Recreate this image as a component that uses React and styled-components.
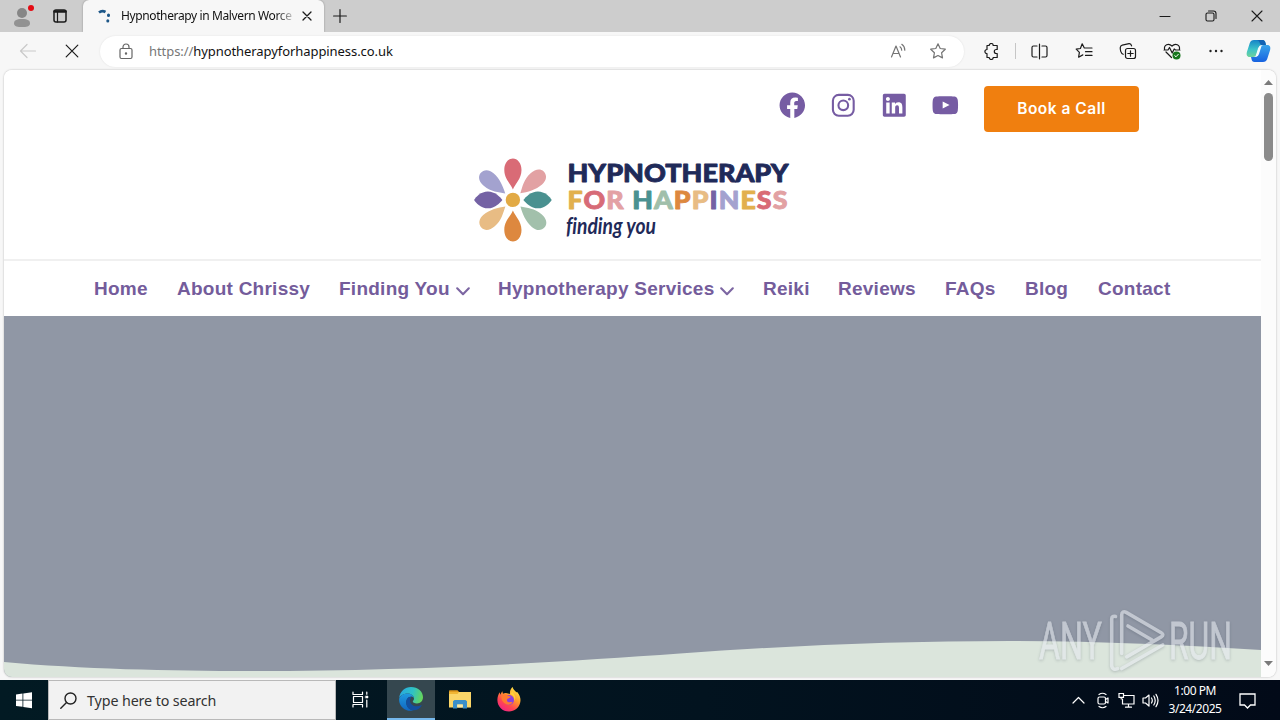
import React from "react";
import styled, { createGlobalStyle } from "styled-components";

const Global = createGlobalStyle`
  * { box-sizing: border-box; }
  html, body { margin: 0; padding: 0; overflow: hidden; }
  body { font-family: "Noto Sans", "Open Sans", sans-serif; }
  svg { display: block; flex: none; }
`;

const Desktop = styled.div`
  width: 1280px; height: 720px; display: flex; flex-direction: column; background: #f7f7f7;
`;
const TabStrip = styled.div`
  height: 32px; flex: none; display: flex; align-items: stretch; background: #cdcdcd;
`;
const Slot = styled.div`
  width: ${p => p.$w}px; flex: none; display: flex; align-items: center; justify-content: center;
  margin-left: ${p => p.$ml || 0}px;
`;
const Tab = styled.div`
  width: 241px; display: flex; align-items: center; padding-left: 14px; background: #f7f7f7;
  border-radius: 6px 6px 0 0; box-shadow: 0 0 2px rgba(0,0,0,.35); clip-path: inset(0 -3px 0 -3px);
`;
const TabTitle = styled.div`
  width: 178px; margin-left: 10px; white-space: nowrap; font-size: 12px; line-height: 18px;
  color: #111; letter-spacing: -0.38px;
  mask-image: linear-gradient(90deg, #000 155px, rgba(0,0,0,.2) 172px);
`;
const Spacer = styled.div`flex: 1;`;

const Toolbar = styled.div`
  height: 38px; flex: none; display: flex; align-items: center; padding-left: 6px;
`;
const Address = styled.div`
  width: 864px; height: 31px; margin-left: 6px; padding: 0 5px 0 16px; border-radius: 16px; background: #fff;
  display: flex; align-items: center; box-shadow: 0 0 2px rgba(0,0,0,.1);
`;
const Url = styled.div`
  flex: 1; margin-left: 13px; font-size: 13px; line-height: 20px; color: #111; letter-spacing: -.07px; white-space: nowrap;
  span { color: #777; }
`;
const Divider = styled.div`width: 1px; height: 16px; margin: 0 1px 0 2px; background: #c6c6c6;`;

const Frame = styled.div`
  height: 607px; flex: none; margin: 0 4px; display: flex; background: #fff; border-radius: 8px; overflow: hidden;
  box-shadow: 0 0 2px rgba(0,0,0,.3);
`;
const Page = styled.main`width: 1257px; display: flex; flex-direction: column;`;
const Scrollbar = styled.div`
  width: 15px; background: #fcfcfc; display: flex; flex-direction: column; align-items: center; padding: 10px 0 10px;
`;
const Thumb = styled.div`width: 9px; height: 68px; margin-top: 8px; border-radius: 5px; background: #8b8b8b;`;

const Header = styled.header`
  height: 189px; flex: none; display: flex; flex-direction: column; padding-top: 16px; background: #fff;
`;
const TopRow = styled.div`height: 46px; display: flex; justify-content: flex-end; padding-right: 122px;`;
const Socials = styled.div`display: flex; gap: 20.4px; padding-top: 3.5px; margin-right: 23.4px;`;
const BookButton = styled.button`
  width: 155px; height: 46px; padding: 0; border: 0; border-radius: 4px; background: #f07f0f; color: #fff;
  font: 600 15.5px/46px Inter, sans-serif; letter-spacing: .5px;
`;
const LogoRow = styled.div`display: flex; padding: 24px 0 0 468px;`;

const Nav = styled.nav`
  height: 57px; flex: none; display: flex; align-items: center; gap: 30px; padding: 1px 0 0 90px;
  border-top: 2px solid #f0f0f0; background: #fff;
`;
const NavItem = styled.a`
  width: ${p => p.$w}px; flex: none; display: flex; align-items: center; gap: 6px;
  color: #745c9b; font: bold 19px/24px "Liberation Sans", sans-serif; letter-spacing: .25px; white-space: nowrap;
  svg { margin-top: 5px; }
`;
const Hero = styled.section`height: 361px; background: #9097a5;`;

const Taskbar = styled.footer`
  height: 40px; flex: none; margin-top: 3px; display: flex; align-items: stretch;
  background: linear-gradient(90deg, #021a23 0%, #02131f 55%, #020a18 100%);
`;
const Search = styled.div`
  width: 288px; display: flex; align-items: center; padding-left: 11px; gap: 10px; background: #f2f2f2;
  border: 1px solid #b9b9b9; color: #333; font-size: 14.3px; letter-spacing: -.12px; white-space: nowrap;
`;
const TaskItem = styled.div`
  width: 48px; margin-left: ${p => p.$ml || 0}px; display: flex; align-items: center; justify-content: center;
  background: ${p => (p.$active ? "#35474f" : "transparent")};
  border-bottom: 2px solid ${p => (p.$active ? "#76b9ed" : "transparent")};
`;
const Clock = styled.div`
  width: 66px; color: #fff; font-size: 12px; line-height: 18px; padding-top: 2px; text-align: center;
  letter-spacing: -.45px; white-space: nowrap;
`;
const Watermark = styled.div`
  position: absolute; left: 1030px; top: 604px; pointer-events: none;
  filter: drop-shadow(0 1px 1.5px rgba(60,70,85,.45)); opacity: .58;
`;

const Icon = ({ s = 18, w, h, sw = 1.2, c = "#1b1b1b", children }) => (
  <svg width={w || s} height={h || s} viewBox={`0 0 ${w || s} ${h || s}`} fill="none" stroke={c}
    strokeWidth={sw} strokeLinecap="round" strokeLinejoin="round">{children}</svg>
);

const STAR = "M9 1.8l2.2 4.7 5.1.7-3.7 3.6.9 5.1L9 13.5l-4.5 2.4.9-5.1L1.7 7.2l5.1-.7z";

const SOCIAL = {
  facebook: "M12 2C6.5 2 2 6.5 2 12c0 5 3.7 9.1 8.4 9.9v-7H7.9V12h2.5V9.8c0-2.5 1.5-3.9 3.8-3.9 1.1 0 2.2.2 2.2.2v2.5h-1.3c-1.2 0-1.6.8-1.6 1.6V12h2.8l-.4 2.9h-2.3v7C18.3 21.1 22 17 22 12c0-5.5-4.5-10-10-10z",
  linkedin: "M19.7,3H4.3C3.582,3,3,3.582,3,4.3v15.4C3,20.418,3.582,21,4.3,21h15.4c0.718,0,1.3-0.582,1.3-1.3V4.3C21,3.582,20.418,3,19.7,3z M8.339,18.338H5.667v-8.59h2.672V18.338z M7.004,8.574c-0.857,0-1.549-0.694-1.549-1.548c0-0.855,0.691-1.548,1.549-1.548c0.854,0,1.547,0.694,1.547,1.548C8.551,7.881,7.858,8.574,7.004,8.574z M18.339,18.338h-2.669v-4.177c0-0.996-0.017-2.278-1.387-2.278c-1.389,0-1.601,1.086-1.601,2.206v4.249h-2.667v-8.59h2.559v1.174h0.037c0.356-0.675,1.227-1.387,2.526-1.387c2.703,0,3.203,1.779,3.203,4.092V18.338z",
  youtube: "M21.8,8.001c0,0-0.195-1.378-0.795-1.985c-0.76-0.797-1.613-0.801-2.004-0.847c-2.799-0.202-6.997-0.202-6.997-0.202h-0.009c0,0-4.198,0-6.997,0.202C4.608,5.216,3.756,5.22,2.995,6.016C2.395,6.623,2.2,8.001,2.2,8.001S2,9.62,2,11.238v1.517c0,1.618,0.2,3.237,0.2,3.237s0.195,1.378,0.795,1.985c0.761,0.797,1.76,0.771,2.205,0.855c1.6,0.153,6.8,0.201,6.8,0.201s4.203-0.006,7.001-0.209c0.391-0.047,1.243-0.051,2.004-0.847c0.6-0.607,0.795-1.985,0.795-1.985s0.2-1.618,0.2-3.237v-1.517C22,9.62,21.8,8.001,21.8,8.001z M9.935,14.594l-0.001-5.62l5.404,2.82L9.935,14.594z",
};
const Social = ({ name }) => (
  <svg width="30.6" height="30.6" viewBox="0 0 24 24" fill="#765ca3">
    {name === "instagram" ? (
      <g fill="none" stroke="#765ca3" strokeWidth="1.65">
        <rect x="3.85" y="3.85" width="16.3" height="16.3" rx="4.6" />
        <circle cx="12" cy="12" r="3.8" />
        <circle cx="16.8" cy="7.2" r="1.05" fill="#765ca3" stroke="none" />
      </g>
    ) : <path d={SOCIAL[name]} />}
  </svg>
);

const PETAL = "M0,-10.5 C-2,-16 -8.6,-21 -8.6,-30 C-8.6,-37 -4.5,-41.5 0,-41.5 C4.500,-41.5 8.6,-37 8.6,-30 C8.6,-21 2,-16 0,-10.5Z";
const DIAGONAL = "M0,-10 C-3.500,-16 -8,-22 -8,-31 C-8,-37 -5.500,-41.5 -0.500,-42 C5,-42 8,-38 8,-32 C8,-24 4,-16 0,-10Z";
const SIDE = "M0,-10.5 C-3,-13 -8.4,-18 -8.4,-25 C-8.4,-32 -3,-37 0,-38.8 C3,-37 8.4,-32 8.4,-25 C8.4,-18 3,-13 0,-10.5Z";
const PETALS = [
  [0, "#d96b76", PETAL], [48, "#e2a1a3", DIAGONAL], [90, "#4a9190", SIDE], [131, "#a2c0ab", DIAGONAL],
  [180, "#dd883f", PETAL], [229, "#e8bc84", DIAGONAL], [270, "#7462a4", SIDE], [310, "#a3a2cf", DIAGONAL],
];
const HAPPY = [
  ["F", "#e2b04d"], ["O", "#d76b77"], ["R", "#e3a1a4"], [" ", "#fff"], ["H", "#4a9190"], ["A", "#a0bfaa"], ["P", "#dd883f"],
  ["P", "#e8bc84"], ["I", "#7462a4"], ["N", "#a3a2cf"], ["E", "#e2b04d"], ["S", "#d96b76"], ["S", "#e2a1a3"],
];
const Logo = () => (
  <svg width="330" height="96" viewBox="472 156 330 96">
    <g transform="translate(512.9 199.9)">
      {PETALS.map(([a, c, d]) => <path key={a} d={d} fill={c} transform={`rotate(${a})`} />)}
      <circle r="7.200" fill="#e2aa45" />
    </g>
    <g fontFamily="Lato, sans-serif" fontWeight="900" strokeWidth=".9" strokeLinejoin="round">
      <text x="567.5" y="181.500" fontSize="25.500" fill="#1f2a59" stroke="#1f2a59" textLength="221" lengthAdjust="spacingAndGlyphs">HYPNOTHERAPY</text>
      <text x="567.5" y="208.800" fontSize="24.500" letterSpacing="1" textLength="221" lengthAdjust="spacingAndGlyphs">
        {HAPPY.map(([l, c], i) => <tspan key={i} fill={c} stroke={c}>{l}</tspan>)}
      </text>
    </g>
    <text x="566" y="234" fill="#1f2a59" fontFamily="Lato, sans-serif" fontStyle="italic" fontWeight="700" fontSize="22"
      textLength="90" lengthAdjust="spacingAndGlyphs" style={{ fontVariantLigatures: "none" }}>finding you</text>
  </svg>
);

const Chevron = () => <Icon w={14} h={9} sw={2.1} c="#7c66a2"><path d="M1.2 1.300L7 7.200l5.800-5.900" /></Icon>;
const NAV = [
  ["Home", 53], ["About Chrissy", 132], ["Finding You", 129, true], ["Hypnotherapy Services", 235, true],
  ["Reiki", 45], ["Reviews", 77], ["FAQs", 50], ["Blog", 43], ["Contact", 73],
];

const Copilot = () => (
  <svg width="25" height="24" viewBox="0 0 25 24">
    <defs>
      <linearGradient id="cpA" x1="0" y1="0" x2="0" y2="1"><stop offset="0" stopColor="#1583c7" /><stop offset=".55" stopColor="#3cc3c9" /><stop offset="1" stopColor="#6fd39a" /></linearGradient>
      <linearGradient id="cpB" x1="0" y1="0" x2="0" y2="1"><stop offset="0" stopColor="#3aa5ea" /><stop offset="1" stopColor="#1762e0" /></linearGradient>
    </defs>
    <path d="M8 1h8.5c2 0 2.6 1.4 3 3l.5 2h-4c-2 0-2.800 1-3.300 2.800l-2 6.200c-.6 2-1.600 3-3.600 3H3.600C.9 18 .2 15.500.9 13L3.800 4C4.500 2 5.800 1 8 1z" fill="url(#cpA)" />
    <path d="M17 23H8.600c-2 0-2.700-1.300-3.100-3l-.5-2h3.800c2 0 2.900-1.100 3.500-3l2-6c.6-2 1.600-3 3.500-3h3.600c2.700 0 3.400 2.500 2.700 5l-2.900 9c-.7 2-2 3-4.200 3z" fill="url(#cpB)" />
    <path d="M8 1h8.500c2 0 2.600 1.400 3 3l.5 2h-4C14.600 6 14 4.800 13.600 3.400 13.200 2 12 1 10.500 1z" fill="#1464b4" />
    <path d="M12 9.500q.8-2.500 2.700-2.500h.8l-2.500 8q-.8 2.500-2.800 2.500H9.500z" fill="#f4fbff" />
  </svg>
);
const Edge = () => (
  <svg width="24" height="24" viewBox="0 0 24 24">
    <defs>
      <linearGradient id="eA" x1="0" y1=".3" x2="1" y2=".5"><stop offset="0" stopColor="#28a8e0" /><stop offset=".55" stopColor="#2fc2c5" /><stop offset="1" stopColor="#66d65a" /></linearGradient>
      <linearGradient id="eB" x1="0" y1="0" x2="0" y2="1"><stop offset="0" stopColor="#1f9be0" /><stop offset="1" stopColor="#1166c0" /></linearGradient>
    </defs>
    <path d="M.2 11C.8 4.600 6 0 12 0c7 0 12 4.800 12 10.200 0 3.800-2.800 6.200-6 6.200-2.600 0-4.200-.9-4.200-1.800 0-.7 1.200-1.200 1.200-3C15 9 12.500 6.400 8.600 6.400 4.500 6.400 1.300 8.600.2 11z" fill="url(#eA)" />
    <path d="M.1 12.500C.3 9 4 6.400 8.600 6.400c3.900 0 6.400 2.600 6.400 5.200 0-1-1.200-2-2.700-2-3 0-5 3-5 6 0 4 3 7.500 7.200 8C6.500 25.200 0 19.400.1 12.500z" fill="url(#eB)" />
    <path d="M9.200 10.600c-3.600 3-2.600 9.600 2.500 12.200 4.800 1.600 9-.8 10.900-4 .3-.5-.1-.8-.6-.5-5.400 2.600-10.500-.1-11-4-.1-1.500.4-2.600 1.300-3.800-.9-.6-2.200-.6-3.100.1z" fill="#134f9e" />
  </svg>
);
const Folder = () => (
  <svg width="22" height="19" viewBox="0 0 22 19">
    <path d="M0 2.500V1.200C0 .5.500.2 1 .2h7.500l2 2.300z" fill="#e09a1d" />
    <path d="M0 2h22v15.500H0z" fill="#fbd668" />
    <path d="M0 2h10l-1.500 2H0z" fill="#f0b634" />
    <path d="M4 18.500v-7.200L5.500 10h11l1.500 1.300v7.200h-4.200v-4H8.200v4z" fill="#3b8fc9" />
    <path d="M8.200 14.500h5.600v3H8.200z" fill="#fde9a6" />
  </svg>
);
const Firefox = () => (
  <svg width="24" height="25" viewBox="0 0 24 25">
    <defs>
      <linearGradient id="fA" x1=".85" y1="0" x2=".2" y2="1"><stop offset="0" stopColor="#fff04a" /><stop offset=".4" stopColor="#ff9a2c" /><stop offset=".7" stopColor="#ff4552" /><stop offset="1" stopColor="#ef2089" /></linearGradient>
    </defs>
    <path d="M2.800 5.200l.3 2.600 2.200-3.600.7 2.600c1-.6 2-.8 3-.7L13 7c-.4-3 .9-5.600 2.700-7 .2 2.400 2 3.400 3.700 5.300l.8-.3c3 3.400 3.800 7 3 10.500C22 21 17.500 24.500 12 24.500 5.500 24.500.5 19.500.4 13.200.3 10 1.300 7.300 2.800 5.200z" fill="url(#fA)" />
    <circle cx="12" cy="13" r="5" fill="#8a3fe0" />
    <path d="M4.500 9c2-2 5-2 6.500-.2 1.500.3 2.600.4 2.600 1-.2 1.300-1.800 1.200-3 2-1 .8-.8 2.600.6 3.200 1.500.8 3-.3 4.300.3-1 2.400-4.500 3.200-7.200 1.500C5.500 15 4 12 4.500 9z" fill="#ff7b30" />
    <path d="M13 7.200c3 0 5 3.200 4.200 6.500 1-.9 1.500-3 .6-4.700L15.500 4.500z" fill="#ffd23c" />
  </svg>
);

const Run = () => (
  <Watermark>
    <svg width="220" height="72" viewBox="1030 604 220 72" fill="#e6eaf0" stroke="#e6eaf0">
      <g fontFamily="Roboto, sans-serif" fontSize="51" strokeWidth=".8">
        <text x="1039" y="658.500" textLength="63" lengthAdjust="spacingAndGlyphs">ANY</text>
        <text x="1169" y="658.500" textLength="63" lengthAdjust="spacingAndGlyphs">RUN</text>
      </g>
      <g fill="none" strokeWidth="3.600" strokeLinecap="round" strokeLinejoin="round">
        <path d="M1115.500 616.500c-2-.8-3.800.3-3.800 2.500v46c0 4 3 5 6 3.600" />
        <path d="M1121.700 653.500V615c0-3.200 2-4 4.500-2.600l35 20.300c2.200 1.400 2.200 2.800 0 4.200l-34.500 20" />
        <path d="M1128 626l24 14" />
        <path d="M1121.700 668.500l41-23.500" />
      </g>
    </svg>
  </Watermark>
);

export default function App() {
  return (
    <Desktop>
      <Global />
      <TabStrip>
        <Slot $w={44}>
          <svg width="28" height="28" viewBox="8 2 28 28"><circle cx="22" cy="13" r="5" fill="#868686" /><path d="M14 23.500c0-3 2-4.500 8-4.500s8 1.500 8 4.500-4 3.500-8 3.500-8-.5-8-3.500z" fill="#929292" /><circle cx="31" cy="8" r="3" fill="#e40b13" /></svg>
        </Slot>
        <Slot $w={32}><Icon s={14} sw={1.500}><rect x="1" y="1" width="12" height="12" rx="2" /><path d="M1.500 2.500h11" strokeWidth="2.500" /><path d="M4.500 3v10" strokeWidth="1.200" /></Icon></Slot>
        <Slot $w={7} />
        <Tab>
          <Icon s={14} sw={2.600} c="#1d5788"><path d="M2 3.500Q5 1 8.500 3" strokeLinecap="butt" /><path d="M11.500 6v.4M10.800 11.800v.2" strokeWidth="3" /></Icon>
          <TabTitle>Hypnotherapy in Malvern Worce</TabTitle>
          <Slot $w={16}><Icon s={10} sw={1.300}><path d="M1 1l8 8M9 1l-8 8" /></Icon></Slot>
        </Tab>
        <Slot $w={32}><Icon s={14}><path d="M7 .6v12.800M.6 7h12.800" /></Icon></Slot>
        <Spacer />
        <Slot $w={46}><Icon s={12} sw={1.100}><path d="M1 6.500h10" /></Icon></Slot>
        <Slot $w={46}><Icon s={12} sw={1.100}><rect x="1" y="3" width="8" height="8" rx="1.500" /><path d="M3.500 1H8.500Q11 1 11 3.500V8.500" /></Icon></Slot>
        <Slot $w={46}><Icon s={12} sw={1.100}><path d="M1 1l10 10M11 1L1 11" /></Icon></Slot>
      </TabStrip>

      <Toolbar>
        <Slot $w={44}><Icon s={18} c="#c9c9c9"><path d="M16.500 9H1.500M8 2.500L1.500 9 8 15.500" /></Icon></Slot>
        <Slot $w={44}><Icon s={14} sw={1.200}><path d="M1.200 1.200l11.600 11.600M12.800 1.200L1.200 12.800" /></Icon></Slot>
        <Address>
          <Slot $w={20}><Icon w={14} h={17} c="#666"><rect x="1" y="5.500" width="12" height="10" rx="1.500" /><path d="M4 5.500V4a3 3 0 0 1 6 0v1.500" /><circle cx="7" cy="10.500" r=".6" fill="#666" /></Icon></Slot>
          <Url><span>https://</span>hypnotherapyforhappiness.co.uk</Url>
          <Slot $w={38}><Icon s={18} c="#757575"><path d="M2.500 15L7 4l4.500 11M4.200 11.500h5.700M11 4.800q1.700 1.200 1.700 3.400M12.800 2.300q3 2 3 5.900" /></Icon></Slot>
          <Slot $w={42}><Icon s={18} c="#757575"><path d={STAR} /></Icon></Slot>
        </Address>
        <Slot $w={44} $ml={5}><Icon s={17}><path d="M4 2.500h2.200a2 2 0 0 1 4 0h4v4h-.9a2 2 0 1 0 0 4h.9v4h-4a2 2 0 0 1-4 0H4v-3.800a2.100 2.100 0 0 1 0-4.200z" /></Icon></Slot>
        <Divider />
        <Slot $w={44}><Icon s={17}><path d="M8.500 1.200v14.600M6 3H2.500Q1 3 1 4.500v8Q1 14 2.500 14H6M11 3h3.500Q16 3 16 4.500v8q0 1.500-1.500 1.500H11" /></Icon></Slot>
        <Slot $w={44} $ml={1}><Icon s={18}><path d="M11.500 6H9.300L7.200 1.800 5.400 6.500l-4.200.6 3.200 3.200-.8 4.900 4.200-2.300M11.500 6H17M10.500 9.700H17M10.500 13.400H17" /></Icon></Slot>
        <Slot $w={44}><Icon s={18}><rect x="6.500" y="6.500" width="10" height="10" rx="2" /><path d="M11.500 8.800v5.400M8.800 11.500h5.400M4.200 12.300C1.800 11.500 1 7.500 1.300 5.300q.3-1.800 2-2.200L10 1.700q2-.3 2.600 2.200" /></Icon></Slot>
        <Slot $w={44}><Icon s={18}><path d="M8.500 15.500L3 10M1.600 7.500C.6 3 5.500.5 9 4c3.500-3.500 8.400-1 7.400 3.500M1 8h4l1.500-2.500L9.200 11l2-4L12.500 8H17" /><circle cx="13.500" cy="13.500" r="4" fill="#16761d" stroke="none" /><path d="M11.700 13.600l1.300 1.200 2.300-2.500" stroke="#fff" strokeWidth="1" /></Icon></Slot>
        <Slot $w={44}><Icon w={16} h={4} c="none"><g fill="#222"><circle cx="2.500" cy="2" r="1.200" /><circle cx="8" cy="2" r="1.200" /><circle cx="13.500" cy="2" r="1.200" /></g></Icon></Slot>
        <Slot $w={40}><Copilot /></Slot>
      </Toolbar>

      <Frame>
        <Page>
          <Header>
            <TopRow>
              <Socials>{["facebook", "instagram", "linkedin", "youtube"].map(n => <Social key={n} name={n} />)}</Socials>
              <BookButton>Book a Call</BookButton>
            </TopRow>
            <LogoRow><Logo /></LogoRow>
          </Header>
          <Nav>{NAV.map(([t, w, m]) => <NavItem key={t} $w={w}>{t}{m && <Chevron />}</NavItem>)}</Nav>
          <Hero>
            <svg width="1257" height="361" viewBox="4 316 1257 361">
              <path d="M4 662C80 669 170 671 250 671C420 671 560 662 680 653.500C790 645.500 900 641 1010 641C1100 641 1180 645 1261 650V677H4Z" fill="#dbe5dc" />
            </svg>
          </Hero>
        </Page>
        <Scrollbar>
          <svg width="9" height="5" viewBox="0 0 9 5"><path d="M0 5L4.500 0 9 5z" fill="#7a7a7a" /></svg>
          <Thumb />
          <Spacer />
          <svg width="9" height="6" viewBox="0 0 9 6"><path d="M0 0h9L4.500 5z" fill="#7a7a7a" /></svg>
        </Scrollbar>
      </Frame>

      <Taskbar>
        <Slot $w={48}><svg width="16" height="17" viewBox="0 0 16 17"><path d="M0 2.500L6.500 1.600v6.200H0zM7.300 1.500L16 .3v7.500H7.300zM0 8.600h6.500v6.200L0 13.900zM7.300 8.600H16v7.600L7.300 15z" fill="#fff" /></svg></Slot>
        <Search>
          <Icon s={17} sw={1.400} c="#222"><circle cx="10.500" cy="6.500" r="5.500" /><path d="M6.500 10.500L.8 16.200" /></Icon>
          <span>Type here to search</span>
        </Search>
        <TaskItem><Icon s={17} c="#fff"><path d="M1 1v2.500h9.500V1M1 16v-2.500h9.500V16M1.500 5.500h9v6h-9zM14.800 1v2.200M14.800 9v7" /><path d="M13.700 5h2.300v2h-2.300z" fill="#fff" strokeWidth=".5" /></Icon></TaskItem>
        <TaskItem $active $ml={3}><Edge /></TaskItem>
        <TaskItem $ml={1}><Folder /></TaskItem>
        <TaskItem $ml={1}><Firefox /></TaskItem>
        <Spacer />
        <Slot $w={24}><Icon w={13} h={8} c="#fff"><path d="M1 7l5.500-5.500L12 7" /></Icon></Slot>
        <Slot $w={24}><Icon s={17} c="#fff" sw={1.200}><rect x="4" y="5" width="7.500" height="7" rx="1.500" /><path d="M11.500 7.500l2.500-1.500v5l-2.500-1.500M5 2.500q3.500-2.500 7 0M5 14.500q3.500 2.500 7 0" /></Icon></Slot>
        <Slot $w={24}><Icon s={17} c="#fff"><path d="M6 3.500h10v8.500H4.500V7M10.500 12v3M7.500 15.200h6M1 1.500h4.500v3.800H1zM3.200 5.300V7" strokeLinejoin="miter" /></Icon></Slot>
        <Slot $w={24}><Icon s={17} c="#fff"><path d="M1 6v5h2.500L7 14V3L3.500 6zM9.500 6q1.600 2.500 0 5M11.800 4q2.800 4.500 0 9M14 2.300q4 6.200 0 12.400" /></Icon></Slot>
        <Clock>1:00 PM<br />3/24/2025</Clock>
        <Slot $w={38}><Icon w={17} h={17} c="#fff" sw={1.300}><path d="M1 2h15v11h-4.500l-3 3-3-3H1z" strokeLinejoin="miter" /></Icon></Slot>
        <Slot $w={14} />
      </Taskbar>
      <Run />
    </Desktop>
  );
}
